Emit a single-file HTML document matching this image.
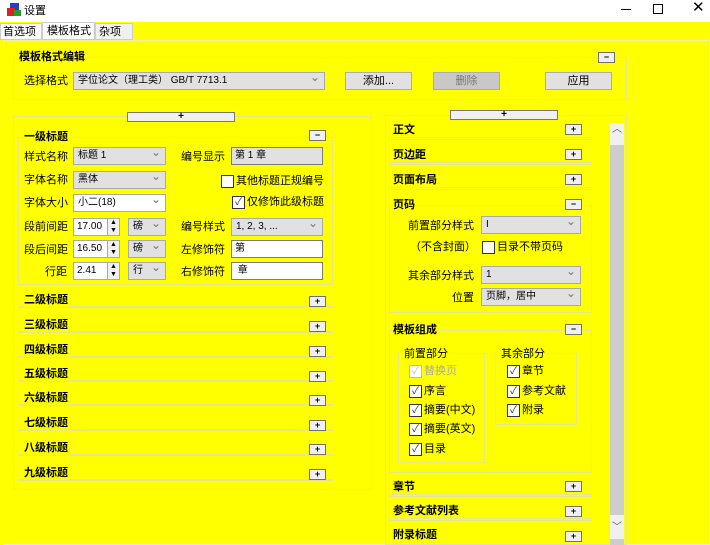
<!DOCTYPE html>
<html><head><meta charset="utf-8"><style>
*{box-sizing:border-box;margin:0;padding:0}
body{width:710px;height:545px;overflow:hidden;background:#ffff00;font-family:"Liberation Sans","Noto Sans CJK SC",sans-serif;font-size:11px;line-height:14px;color:#000;position:relative}
.a{position:absolute;white-space:nowrap}
.b{font-weight:bold}
.fr{position:absolute;border:1px solid #e6e68a}
.cb{position:absolute;background:#e1e1e1;border:1px solid #a9a9a9;height:18px;padding:1px 4px;font-size:10px}
.cb.w{background:#fff}
.cb:after{content:"\2304";position:absolute;right:4px;top:-3px;color:#777;font-size:12px}
.tx{position:absolute;background:#fff;border:1px solid #7a7a7a;height:18px;padding:1px 3px;font-size:10px}
.btn{position:absolute;background:#e1e1e1;border:1px solid #adadad;height:18px;text-align:center;line-height:16px}
.pl{position:absolute;background:#f0f0f0;border:1px solid #707070;width:17px;height:11px;font-size:9px;line-height:8px;text-align:center;font-weight:bold}
.ck{position:absolute;width:13px;height:13px;border:1px solid #333;background:#fff;font-size:10px;line-height:11px;text-align:center;color:#333}
.sp{position:absolute;width:13px;height:18px;border:1px solid #a9a9a9;background:#f0f0f0;font-size:7px;line-height:8px;text-align:center}
</style></head><body>
<div class="a" style="left:0;top:0;width:710px;height:22px;background:#fff"></div>
<svg class="a" style="left:6px;top:2px" width="16" height="16"><rect x="4" y="1" width="9" height="8" fill="#2040d0"/><rect x="1" y="6" width="8" height="8" fill="#e02020"/><rect x="8" y="8" width="7" height="6" fill="#20a020"/></svg>
<div class="a" style="left:24px;top:4px">设置</div>
<div class="a" style="left:621px;top:9px;width:10px;height:1px;background:#000"></div>
<div class="a" style="left:653px;top:4px;width:10px;height:10px;border:1px solid #000"></div>
<div class="a" style="left:692px;top:1px;font-size:15px">✕</div>
<div class="a" style="left:0;top:23px;width:42px;height:17px;background:#fff;border:1px solid #ccc;padding:1px 0 0 2px">首选项</div>
<div class="a" style="left:42px;top:22px;width:53px;height:18px;background:#fff;border:1px solid #ccc;padding:1px 0 0 4px">模板格式</div>
<div class="a" style="left:95px;top:23px;width:38px;height:17px;background:#f0f0f0;border:1px solid #ccc;padding:1px 0 0 3px">杂项</div>
<div class="fr" style="left:3px;top:40px;width:707px;height:505px;border-color:#f0f0a0"></div>

<div class="fr" style="left:13px;top:57px;width:614px;height:43px"></div>
<div class="a b" style="left:19px;top:50px;background:#ff0">模板格式编辑</div>
<div class="pl" style="left:598px;top:52px">−</div>
<div class="a" style="left:24px;top:74px">选择格式</div>
<div class="cb" style="left:73px;top:72px;width:252px">学位论文（理工类） GB/T 7713.1</div>
<div class="btn" style="left:345px;top:72px;width:67px">添加...</div>
<div class="btn" style="left:433px;top:72px;width:67px;background:#c8c8c8;color:#777">删除</div>
<div class="btn" style="left:545px;top:72px;width:67px">应用</div>

<div class="fr" style="left:13px;top:116px;width:359px;height:374px"></div>
<div class="btn" style="left:127px;top:112px;width:108px;height:10px;line-height:7px;font-size:10px;font-weight:bold;background:#f0f0f0;border-color:#777">+</div>
<div class="fr" style="left:18px;top:137px;width:315px;height:148px"></div>
<div class="a b" style="left:24px;top:130px;background:#ff0">一级标题</div>
<div class="pl" style="left:309px;top:130px">−</div>
<div class="a" style="left:24px;top:150px">样式名称</div><div class="cb" style="left:73px;top:147px;width:93px">标题 1</div>
<div class="a" style="left:24px;top:173px">字体名称</div><div class="cb" style="left:73px;top:171px;width:93px">黑体</div>
<div class="a" style="left:24px;top:196px">字体大小</div><div class="cb w" style="left:73px;top:194px;width:93px">小二(18)</div>
<div class="a" style="left:24px;top:220px">段前间距</div><div class="tx" style="left:73px;top:218px;width:35px;border-color:#a9a9a9">17.00</div><div class="sp" style="left:107px;top:218px">▲<br>▼</div><div class="cb" style="left:128px;top:218px;width:38px">磅</div>
<div class="a" style="left:24px;top:243px">段后间距</div><div class="tx" style="left:73px;top:240px;width:35px;border-color:#a9a9a9">16.50</div><div class="sp" style="left:107px;top:240px">▲<br>▼</div><div class="cb" style="left:128px;top:240px;width:38px">磅</div>
<div class="a" style="left:45px;top:265px">行距</div><div class="tx" style="left:73px;top:262px;width:35px;border-color:#a9a9a9">2.41</div><div class="sp" style="left:107px;top:262px">▲<br>▼</div><div class="cb" style="left:128px;top:262px;width:38px">行</div>
<div class="a" style="left:181px;top:150px">编号显示</div><div class="tx" style="left:231px;top:147px;width:92px;background:#e1e1e1">第 1 章</div>
<div class="ck" style="left:221px;top:175px"></div><div class="a" style="left:236px;top:174px">其他标题正规编号</div>
<div class="ck" style="left:232px;top:196px">✓</div><div class="a" style="left:247px;top:195px">仅修饰此级标题</div>
<div class="a" style="left:181px;top:220px">编号样式</div><div class="cb" style="left:231px;top:218px;width:92px">1, 2, 3, ...</div>
<div class="a" style="left:181px;top:243px">左修饰符</div><div class="tx" style="left:231px;top:240px;width:92px">第</div>
<div class="a" style="left:181px;top:265px">右修饰符</div><div class="tx" style="left:231px;top:262px;width:92px">&nbsp;章</div>

<div class="fr" style="left:18px;top:306px;width:315px;height:1px"></div><div class="a b" style="left:24px;top:293px;background:#ff0">二级标题</div><div class="pl" style="left:309px;top:296px">+</div>
<div class="fr" style="left:18px;top:331px;width:315px;height:1px"></div><div class="a b" style="left:24px;top:318px;background:#ff0">三级标题</div><div class="pl" style="left:309px;top:321px">+</div>
<div class="fr" style="left:18px;top:356px;width:315px;height:1px"></div><div class="a b" style="left:24px;top:343px;background:#ff0">四级标题</div><div class="pl" style="left:309px;top:346px">+</div>
<div class="fr" style="left:18px;top:380px;width:315px;height:1px"></div><div class="a b" style="left:24px;top:367px;background:#ff0">五级标题</div><div class="pl" style="left:309px;top:371px">+</div>
<div class="fr" style="left:18px;top:404px;width:315px;height:1px"></div><div class="a b" style="left:24px;top:391px;background:#ff0">六级标题</div><div class="pl" style="left:309px;top:395px">+</div>
<div class="fr" style="left:18px;top:429px;width:315px;height:1px"></div><div class="a b" style="left:24px;top:416px;background:#ff0">七级标题</div><div class="pl" style="left:309px;top:420px">+</div>
<div class="fr" style="left:18px;top:454px;width:315px;height:1px"></div><div class="a b" style="left:24px;top:441px;background:#ff0">八级标题</div><div class="pl" style="left:309px;top:444px">+</div>
<div class="fr" style="left:18px;top:479px;width:315px;height:1px"></div><div class="a b" style="left:24px;top:466px;background:#ff0">九级标题</div><div class="pl" style="left:309px;top:469px">+</div>

<div class="fr" style="left:385px;top:115px;width:242px;height:430px"></div>
<div class="btn" style="left:450px;top:110px;width:108px;height:10px;line-height:7px;font-size:10px;font-weight:bold;background:#f0f0f0;border-color:#777">+</div>
<div class="a" style="left:610px;top:123px;width:14px;height:422px;background:#cdcdcd"></div>
<div class="a" style="left:610px;top:123px;width:14px;height:22px;background:#f0f0f0;text-align:center;font-size:10px;color:#555">︿</div>
<div class="a" style="left:610px;top:515px;width:14px;height:24px;background:#f0f0f0;text-align:center;font-size:10px;color:#555;line-height:26px">﹀</div>
<div class="fr" style="left:389px;top:137px;width:203px;height:3px"></div><div class="a b" style="left:393px;top:123px;background:#ff0">正文</div><div class="pl" style="left:565px;top:124px">+</div>
<div class="fr" style="left:389px;top:162px;width:203px;height:3px"></div><div class="a b" style="left:393px;top:148px;background:#ff0">页边距</div><div class="pl" style="left:565px;top:149px">+</div>
<div class="fr" style="left:389px;top:187px;width:203px;height:3px"></div><div class="a b" style="left:393px;top:173px;background:#ff0">页面布局</div><div class="pl" style="left:565px;top:174px">+</div>
<div class="fr" style="left:389px;top:205px;width:203px;height:108px"></div><div class="a b" style="left:393px;top:198px;background:#ff0">页码</div><div class="pl" style="left:565px;top:199px">−</div>
<div class="a" style="left:408px;top:219px">前置部分样式</div><div class="cb" style="left:481px;top:216px;width:100px">I</div>
<div class="a" style="left:410px;top:240px">（不含封面）</div><div class="ck" style="left:482px;top:241px"></div><div class="a" style="left:497px;top:240px">目录不带页码</div>
<div class="a" style="left:408px;top:269px">其余部分样式</div><div class="cb" style="left:481px;top:266px;width:100px">1</div>
<div class="a" style="left:452px;top:291px">位置</div><div class="cb" style="left:481px;top:288px;width:100px">页脚，居中</div>
<div class="fr" style="left:389px;top:330px;width:203px;height:143px"></div><div class="a b" style="left:393px;top:323px;background:#ff0">模板组成</div><div class="pl" style="left:565px;top:324px">−</div>
<div class="fr" style="left:398px;top:353px;width:87px;height:110px"></div><div class="a" style="left:404px;top:347px;background:#ff0">前置部分</div>
<div class="ck" style="left:409px;top:365px;border-color:#bbb;color:#bbb">✓</div><div class="a" style="left:424px;top:364px;color:#aaa">替换页</div>
<div class="ck" style="left:409px;top:385px">✓</div><div class="a" style="left:424px;top:384px">序言</div>
<div class="ck" style="left:409px;top:404px">✓</div><div class="a" style="left:424px;top:403px">摘要(中文)</div>
<div class="ck" style="left:409px;top:423px">✓</div><div class="a" style="left:424px;top:422px">摘要(英文)</div>
<div class="ck" style="left:409px;top:443px">✓</div><div class="a" style="left:424px;top:442px">目录</div>
<div class="fr" style="left:495px;top:353px;width:82px;height:72px"></div><div class="a" style="left:501px;top:347px;background:#ff0">其余部分</div>
<div class="ck" style="left:507px;top:365px">✓</div><div class="a" style="left:522px;top:364px">章节</div>
<div class="ck" style="left:507px;top:385px">✓</div><div class="a" style="left:522px;top:384px">参考文献</div>
<div class="ck" style="left:507px;top:404px">✓</div><div class="a" style="left:522px;top:403px">附录</div>
<div class="fr" style="left:389px;top:494px;width:203px;height:3px"></div><div class="a b" style="left:393px;top:480px;background:#ff0">章节</div><div class="pl" style="left:565px;top:481px">+</div>
<div class="fr" style="left:389px;top:518px;width:203px;height:3px"></div><div class="a b" style="left:393px;top:504px;background:#ff0">参考文献列表</div><div class="pl" style="left:565px;top:506px">+</div>
<div class="a b" style="left:393px;top:528px;background:#ff0">附录标题</div><div class="pl" style="left:565px;top:531px">+</div>
</body></html>
